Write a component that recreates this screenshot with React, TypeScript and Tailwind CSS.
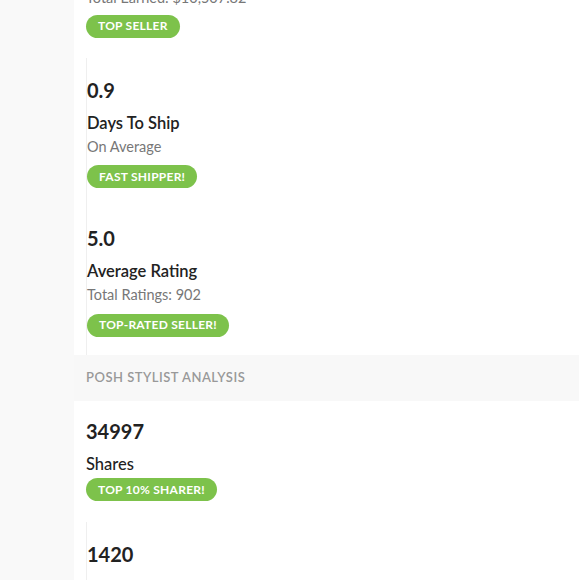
const sellerStats = [
  { value: '0.9', label: 'Days To Ship', sub: 'On Average', badge: 'FAST SHIPPER!' },
  { value: '5.0', label: 'Average Rating', sub: 'Total Ratings: 902', badge: 'TOP-RATED SELLER!' },
]

function Badge({ children }: { children: string }) {
  return (
    <span className="inline-flex h-[23px] items-center rounded-full bg-[#7dc24b] px-3 text-[12px] font-bold tracking-[0.25px] text-white">
      {children}
    </span>
  )
}

type Stat = { value: string; label: string; sub?: string; badge: string; light?: boolean }

function StatBlock({ stat, bordered }: { stat: Stat; bordered?: boolean }) {
  return (
    <div className={bordered ? 'border-l border-[#efefef] pt-5 pb-[18px]' : 'pt-[18px] pb-[21px]'}>
      <div className="text-[20px] leading-6 font-bold text-[#222]">{stat.value}</div>
      <div className={`mt-[9px] text-[16.5px] leading-6 text-[#222] ${stat.light ? 'font-medium' : 'font-semibold'}`}>
        {stat.label}
      </div>
      {stat.sub && <div className="text-[14.5px] leading-6 text-[#777]">{stat.sub}</div>}
      <div className={stat.sub ? 'mt-1' : 'mt-0'}>
        <Badge>{stat.badge}</Badge>
      </div>
    </div>
  )
}

export default function App() {
  return (
    <div className="flex min-h-[580px] bg-[#f9f9f9] font-['Lato',sans-serif]">
      <div className="w-[74px] shrink-0" />
      <div className="flex-1 bg-white">
        <div className="pl-3">
          <div className="-mt-[14px] pb-5">
            <div className="text-[14.5px] leading-6 text-[#777]">Total Earned: $10,507.82</div>
            <div className="mt-[2px]">
              <Badge>TOP SELLER</Badge>
            </div>
          </div>
          {sellerStats.map((s) => (
            <StatBlock bordered key={s.label} stat={s} />
          ))}
        </div>
        <div className="flex h-[46px] items-center bg-[#f8f8f8] pl-3 text-[13px] font-semibold tracking-[0.5px] text-[#999]">
          POSH STYLIST ANALYSIS
        </div>
        <div className="pl-3">
          <StatBlock stat={{ value: '34997', label: 'Shares', badge: 'TOP 10% SHARER!', light: true }} />
          <StatBlock bordered stat={{ value: '1420', label: 'Followers', badge: 'TOP 10% STYLIST!' }} />
        </div>
      </div>
    </div>
  )
}
